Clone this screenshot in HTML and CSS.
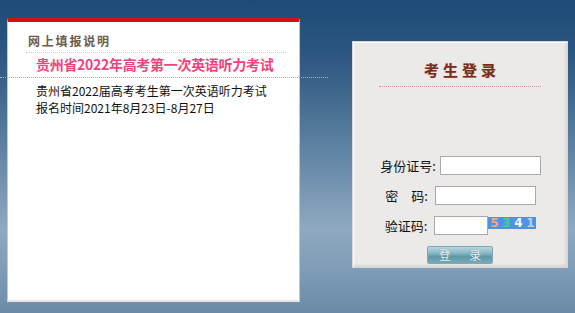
FILE: index.html
```html
<!DOCTYPE html>
<html lang="zh-CN">
<head>
<meta charset="utf-8">
<title>考生登录</title>
<link rel="stylesheet" href="styles.css">
</head>
<body>
<div class="page">
  <section class="notice">
    <h2 class="notice-head">网上填报说明</h2>
    <h1 class="notice-title">贵州省2022年高考第一次英语听力考试</h1>
    <div class="notice-sep"></div>
    <p class="notice-text">贵州省2022届高考考生第一次英语听力考试<br>报名时间2021年8月23日-8月27日</p>
  </section>
  <section class="login">
    <div class="login-title">考生登录</div>
    <form class="login-form">
      <div class="row row-id"><label class="lbl">身份证号:</label><input class="field" type="text"></div>
      <div class="row"><label class="lbl">密　码:</label><input class="field" type="password"></div>
      <div class="row"><label class="lbl">验证码:</label><input class="field field-short" type="text"><span class="captcha"><b class="c1">5</b><b class="c2">3</b><b class="c3">4</b><b class="c4">1</b></span></div>
      <button class="btn" type="button">登 录</button>
    </form>
  </section>
</div>
</body>
</html>
```
FILE: styles.css
```css
html, body {
  margin: 0;
  height: 100%;
}
body {
  font-family: "Noto Sans CJK SC", "Liberation Sans", sans-serif;
  background: linear-gradient(to bottom, #1d4a76 0%, #2a5580 15%, #3b6389 27%, #5b7fa0 45%, #7a98b4 62%, #8ea9c0 73%, #7f9db7 86%, #6a8aa7 100%);
  overflow: hidden;
}
.page {
  display: flex;
  align-items: flex-start;
  padding-left: 7px;
}
.notice {
  box-sizing: border-box;
  width: 293px;
  height: 284px;
  margin-top: 18px;
  background: #fff;
  border-top: 4px solid #d3120f;
  border-left: 1px solid #c4c8cc;
  border-right: 1px solid #c4c8cc;
  border-bottom: 2px solid #e6e6e6;
}
.notice-head {
  margin: 0 13px 0 18px;
  padding: 11px 0 4px 2px;
  border-bottom: 1px dotted #c9c9c9;
  font-size: 12px;
  line-height: 15px;
  font-weight: bold;
  letter-spacing: 1.8px;
  color: #6d5c4c;
}
.notice-title {
  margin: 0;
  padding: 0 0 2px 28px;
  font-size: 14px;
  line-height: 22px;
  font-weight: bold;
  color: #f2427c;
  letter-spacing: -0.3px;
  white-space: nowrap;
}
.notice-sep {
  margin: 0 -29px 0 -8px;
  border-top: 1px dotted #9ab3c1;
}
.notice-text {
  margin: 4px 0 0;
  padding-left: 28px;
  font-size: 12px;
  line-height: 17px;
  color: #111;
}
.login {
  box-sizing: border-box;
  width: 216px;
  height: 227px;
  margin: 41px 0 0 52px;
  background: #ebeae8;
  border: 1px solid #d6d6d4;
  box-shadow: inset 1px 1px 0 #fafafa, inset -2px -2px 2px #d8d8d6;
  display: flex;
  flex-direction: column;
  align-items: center;
}
.login-title {
  width: 162px;
  margin-top: 19px;
  padding: 0 0 7px 4px;
  box-sizing: border-box;
  border-bottom: 1px dotted #c8939a;
  text-align: center;
  font-size: 15px;
  line-height: 18px;
  font-weight: bold;
  letter-spacing: 4px;
  color: #7b2b1b;
  text-shadow: 0 0 1px #c9a89f;
}
.login-form {
  margin-top: 69px;
  display: flex;
  flex-direction: column;
  align-items: center;
  gap: 11px;
}
.row {
  display: flex;
  align-items: center;
  gap: 7px;
  height: 19px;
  padding-left: 1px;
}
.row-id {
  gap: 4px;
}
.lbl {
  font-size: 13px;
  line-height: 19px;
  color: #111;
  white-space: nowrap;
}
.field {
  box-sizing: border-box;
  width: 101px;
  height: 19px;
  margin: 0;
  padding: 0 2px;
  border: 1px solid #a9a9a9;
  background: #fff;
  outline: none;
}
.field-short {
  width: 54px;
}
.captcha {
  display: flex;
  align-items: center;
  justify-content: space-around;
  align-self: flex-start;
  width: 48px;
  height: 12px;
  margin-left: -7px;
  margin-top: 1px;
  background: #4f93e2;
  font-family: "DejaVu Sans", sans-serif;
  font-size: 12px;
  line-height: 12px;
}
.captcha b { font-weight: bold; }
.c1 { color: #f5ab6e; }
.c2 { color: #3fd486; }
.c3 { color: #f4f8fc; }
.c4 { color: #b8d4e0; }
.btn {
  width: 66px;
  height: 18px;
  margin-top: 0;
  padding: 0;
  border: 1px solid #7fa9b6;
  border-radius: 2px;
  background: linear-gradient(to bottom, #b7d6de 0%, #8dbcc8 35%, #5d97a7 60%, #78abb9 100%);
  color: #eef3f4;
  font-family: "Noto Sans CJK SC", sans-serif;
  font-size: 12px;
  line-height: 16px;
  letter-spacing: 8px;
  padding-left: 8px;
  text-shadow: 0 0 1px #4b6f79;
}
```
